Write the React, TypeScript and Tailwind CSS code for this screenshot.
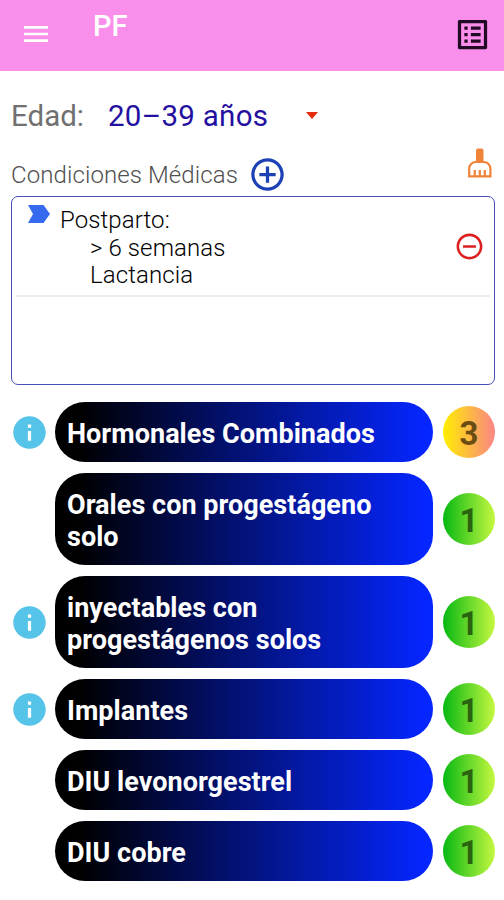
import {
  MdMenu,
  MdListAlt,
  MdAddCircleOutline,
  MdRemoveCircleOutline,
  MdInfo,
} from "react-icons/md";

interface Method {
  name: string;
  category: number;
  hasInfo: boolean;
}

const methods: Method[] = [
  { name: "Hormonales Combinados", category: 3, hasInfo: true },
  { name: "Orales con progestágeno solo", category: 1, hasInfo: false },
  { name: "inyectables con progestágenos solos", category: 1, hasInfo: true },
  { name: "Implantes", category: 1, hasInfo: true },
  { name: "DIU levonorgestrel", category: 1, hasInfo: false },
  { name: "DIU cobre", category: 1, hasInfo: false },
];

const badgeColors: Record<number, string> = {
  1: "from-[#06b813] to-[#c6f840] text-[#2b6410]",
  3: "from-[#ffee00] to-[#fb8585] text-[#6b4d12]",
};

function BroomIcon() {
  return (
    <svg width="24" height="30" viewBox="0 0 24 30" fill="none" stroke="#f0833a" strokeWidth="2.2">
      <rect x="8" y="0.5" width="7.5" height="14" rx="2" fill="#f0833a" stroke="none" />
      <path d="M1.2 28.3V20.5a6.5 6.5 0 0 1 6.5-6.5h8.2a6.5 6.5 0 0 1 6.5 6.5v7.8z" />
      <path d="M6.8 28v-6M11.8 28v-6M16.8 28v-6" />
    </svg>
  );
}

function MethodRow({ method }: { method: Method }) {
  return (
    <div className="flex items-center">
      <div className="w-[45px] shrink-0">
        {method.hasInfo && <MdInfo size={39} className="text-[#56c3e8]" />}
      </div>
      <div className="flex min-h-[60px] w-[378px] shrink-0 items-center rounded-[30px] bg-linear-to-r/srgb from-black from-6% to-[#0526ff] to-98% pt-4 pr-10 pb-3 pl-3">
        <span className="text-[27px] leading-8 font-bold tracking-[0.03px] text-white">{method.name}</span>
      </div>
      <div
        className={`ml-[10px] flex size-[52px] shrink-0 items-center justify-center rounded-full bg-linear-to-r/srgb pt-[3px] text-[33px] font-bold ${badgeColors[method.category]}`}
      >
        {method.category}
      </div>
    </div>
  );
}

export default function App() {
  return (
    <div className="h-[900px] w-[504px] overflow-hidden bg-white font-['Roboto',sans-serif]">
      {/* Top bar */}
      <header className="flex h-[71px] items-start bg-[#fa8eeb] pr-3 pl-5 text-white">
        <MdMenu size={32} className="mt-[18px]" />
        <h1 className="mt-[9px] ml-[41px] text-[29px] leading-[34px] font-medium">PF</h1>
        <MdListAlt size={39} className="mt-[15px] ml-auto text-[#210a24]" />
      </header>

      <main className="px-[10px]">
        {/* Age selector */}
        <div className="flex h-[76px] items-center pt-[15px] pl-px text-[29.5px]">
          <span className="text-[#707070]">Edad:</span>
          <span className="ml-6 tracking-[0.3px] text-[#2410a0]">20–39 años</span>
          <svg width="12" height="7" viewBox="0 0 12 7" className="mb-0.5 ml-[38px]">
            <path d="M0 0h12L6 7z" fill="#e8290b" />
          </svg>
        </div>

        {/* Medical conditions */}
        <div className="flex h-[49px] items-start pr-[2px]">
          <h2 className="mt-[10px] pl-px text-[24px] leading-9 font-light tracking-[0.1px] text-[#505050]">
            Condiciones Médicas
          </h2>
          <MdAddCircleOutline size={39} className="mt-2 ml-[10px] text-[#1c41b4]" />
          <div className="mt-px ml-auto">
            <BroomIcon />
          </div>
        </div>

        <div className="ml-px h-[189px] w-[484px] rounded-[7px] border border-[#4650b8]">
          <div className="mx-1 flex h-[100px] border-b-2 border-[#ececec]">
            <svg width="22" height="18" viewBox="0 0 22 18" className="mt-2 ml-3">
              <path d="M0 0h15.5L22 9l-6.5 9H0L5 9z" fill="#356aee" />
            </svg>
            <div className="mt-[10px] ml-[10px] text-[24px] leading-[27.7px] font-light tracking-[0.1px] text-black">
              <p>Postparto:</p>
              <p className="pl-[30px]">&gt; 6 semanas</p>
              <p className="pl-[30px]">Lactancia</p>
            </div>
            <MdRemoveCircleOutline size={31} className="mr-[5px] ml-auto self-center text-[#dc2020]" />
          </div>
        </div>

        {/* Contraceptive methods */}
        <div className="mt-[17px] flex flex-col gap-[11px]">
          {methods.map((method) => (
            <MethodRow key={method.name} method={method} />
          ))}
        </div>
      </main>
    </div>
  );
}
